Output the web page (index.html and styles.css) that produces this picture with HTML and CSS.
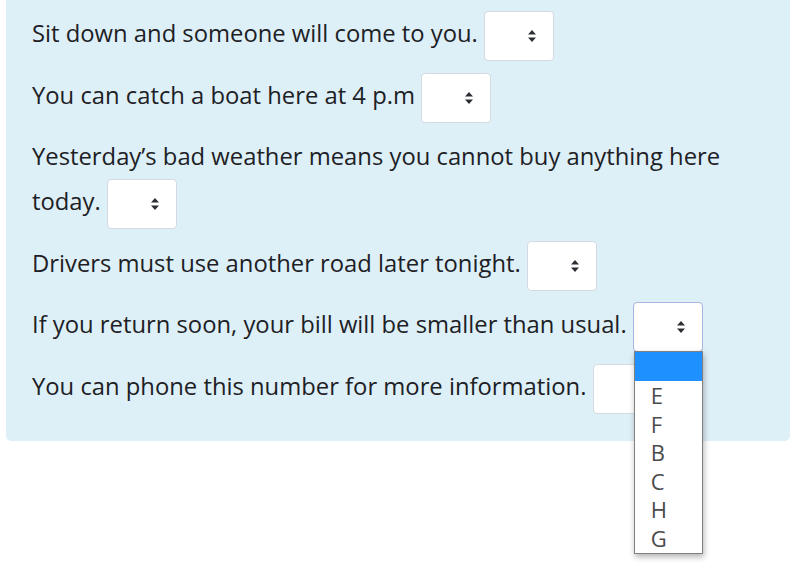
FILE: index.html
```html
<!DOCTYPE html>
<html lang="en">
<head>
<meta charset="utf-8">
<title>Match the notices</title>
<link rel="stylesheet" href="styles.css">
</head>
<body>
<div class="page">
  <div class="formulation">
    <p class="q">Sit down and someone will come to you. <span class="sel"><svg class="arr" viewBox="0 0 8 12" width="8" height="12"><path d="M4 0L8 4.5H0Z M4 12L0 7.5H8Z"/></svg></span></p>
    <p class="q">You can catch a boat here at 4 p.m <span class="sel"><svg class="arr" viewBox="0 0 8 12" width="8" height="12"><path d="M4 0L8 4.5H0Z M4 12L0 7.5H8Z"/></svg></span></p>
    <p class="q">Yesterday’s bad weather means you cannot buy anything here today. <span class="sel"><svg class="arr" viewBox="0 0 8 12" width="8" height="12"><path d="M4 0L8 4.5H0Z M4 12L0 7.5H8Z"/></svg></span></p>
    <p class="q">Drivers must use another road later tonight. <span class="sel"><svg class="arr" viewBox="0 0 8 12" width="8" height="12"><path d="M4 0L8 4.5H0Z M4 12L0 7.5H8Z"/></svg></span></p>
    <p class="q">If you return soon, your bill will be smaller than usual. <span class="selwrap"><span class="sel focus"><svg class="arr" viewBox="0 0 8 12" width="8" height="12"><path d="M4 0L8 4.5H0Z M4 12L0 7.5H8Z"/></svg></span><span class="list"><span class="opt hl"></span><span class="opt">E</span><span class="opt">F</span><span class="opt">B</span><span class="opt">C</span><span class="opt">H</span><span class="opt">G</span></span></span></p>
    <p class="q">You can phone this number for more information. <span class="sel"><svg class="arr" viewBox="0 0 8 12" width="8" height="12"><path d="M4 0L8 4.5H0Z M4 12L0 7.5H8Z"/></svg></span></p>
  </div>
</div>
</body>
</html>
```
FILE: styles.css
```css
html, body {
  margin: 0;
  padding: 0;
  background: #ffffff;
}
body {
  min-height: 572px;
}
.page {
  padding: 0 5px 0 6px;
  font-family: "Open Sans", "Lato", sans-serif;
  font-size: 23.8px;
  color: #1d2125;
}
.formulation {
  background: #def0f7;
  border-radius: 0 0 5px 5px;
  padding: 11px 20px 27px 26px;
}
.q {
  margin: 0 0 11.6px 0;
  line-height: 45px;
}
.q:last-child {
  margin-bottom: 0;
}
.sel {
  display: inline-flex;
  align-items: center;
  justify-content: flex-end;
  box-sizing: border-box;
  width: 70px;
  height: 50px;
  padding-right: 17px;
  background: #ffffff;
  border: 1px solid #d4dadf;
  border-radius: 4px;
  vertical-align: middle;
}
.sel.focus {
  border-color: #a9b3e0;
}
.arr {
  fill: #2b2f33;
}
.selwrap {
  position: relative;
  display: inline-block;
  vertical-align: middle;
}
.list {
  position: absolute;
  top: 49px;
  left: 1px;
  width: 69px;
  box-sizing: border-box;
  display: flex;
  flex-direction: column;
  background: #ffffff;
  border: 1px solid #808080;
  box-shadow: 1px 3px 6px rgba(0, 0, 0, 0.3);
  z-index: 10;
}
.opt {
  display: block;
  height: 28.6px;
  line-height: 28.6px;
  padding-left: 16px;
  color: #4a4a4a;
  font-size: 22px;
}
.opt.hl {
  background: #1e90ff;
}
```
